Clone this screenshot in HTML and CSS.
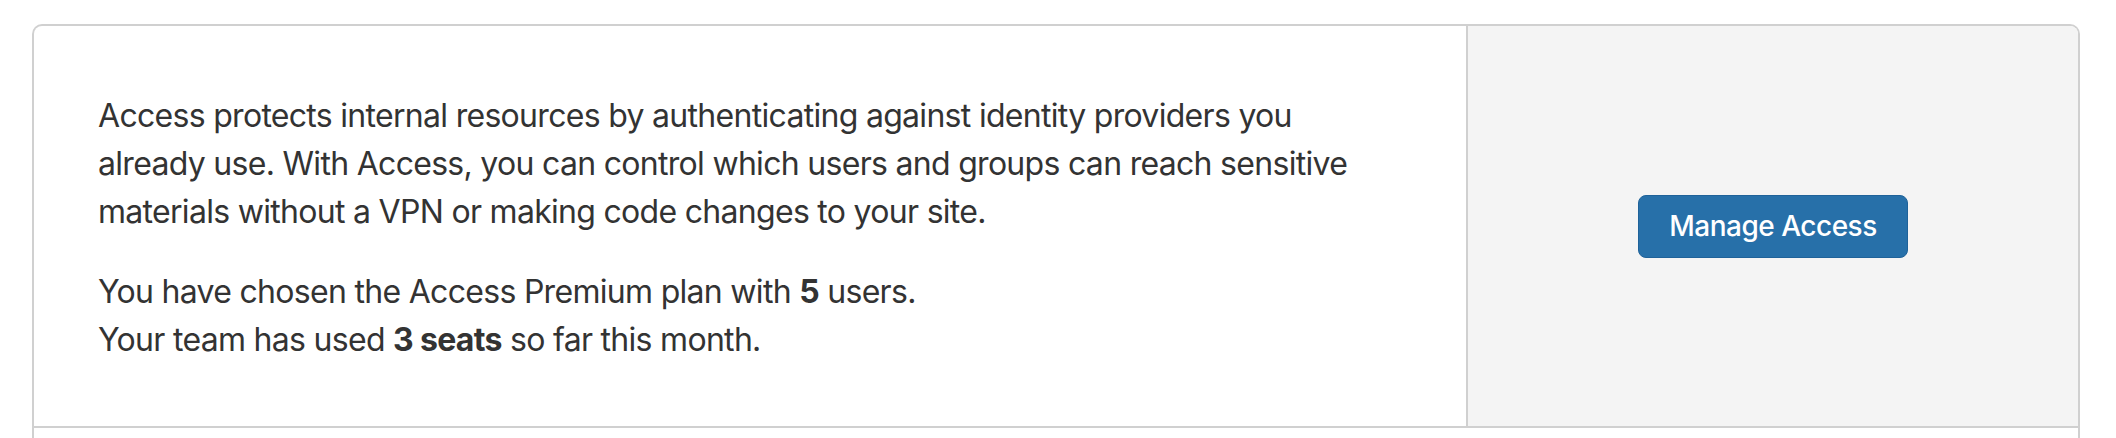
FILE: index.html
```html
<!DOCTYPE html>
<html lang="en">
<head>
    <meta charset="UTF-8">
    <title>Access</title>
    <link rel="stylesheet" href="styles.css">
</head>
<body>
    <div class="card">
        <div class="card-row">
            <div class="card-body">
                <p>Access protects internal resources by authenticating against identity providers you already use. With Access, you can control which users and groups can reach sensitive materials without a VPN or making code changes to your site.</p>
                <p>You have chosen the Access Premium plan with <b>5</b> users.<br>Your team has used <b>3 seats</b> so far this month.</p>
            </div>
            <div class="card-aside">
                <button class="btn">Manage Access</button>
            </div>
        </div>
        <div class="card-row card-row-next"></div>
    </div>
</body>
</html>
```

FILE: styles.css
```css
body {
    margin: 0;
    background: #fff;
    font-family: Inter, "Noto Sans", sans-serif;
    color: #333;
}
.card {
    margin: 24px 36px 0 32px;
    border: 2px solid #d0d0d0;
    border-bottom: none;
    border-radius: 10px 10px 0 0;
    overflow: hidden;
}
.card-row {
    display: flex;
    height: 400px;
    border-bottom: 2px solid #d0d0d0;
}
.card-row-next {
    height: 10px;
    border-bottom: none;
}
.card-body {
    flex: 1;
    padding: 66px 64px 0 64px;
    font-size: 32px;
    line-height: 48px;
    letter-spacing: -0.7px;
}
.card-body p {
    margin: 0 0 32px 0;
}
.card-body b {
    font-weight: 700;
}
.card-aside {
    width: 610px;
    background: #f4f4f4;
    border-left: 2px solid #d0d0d0;
    display: flex;
    align-items: center;
    justify-content: center;
}
.btn {
    font-family: Inter, "Noto Sans", sans-serif;
    font-size: 28px;
    font-weight: 500;
    line-height: 41px;
    letter-spacing: -0.5px;
    color: #fff;
    background: #2770a9;
    border: 1px solid #1f6299;
    border-radius: 8px;
    padding: 10px 30px;
    cursor: pointer;
}
```
